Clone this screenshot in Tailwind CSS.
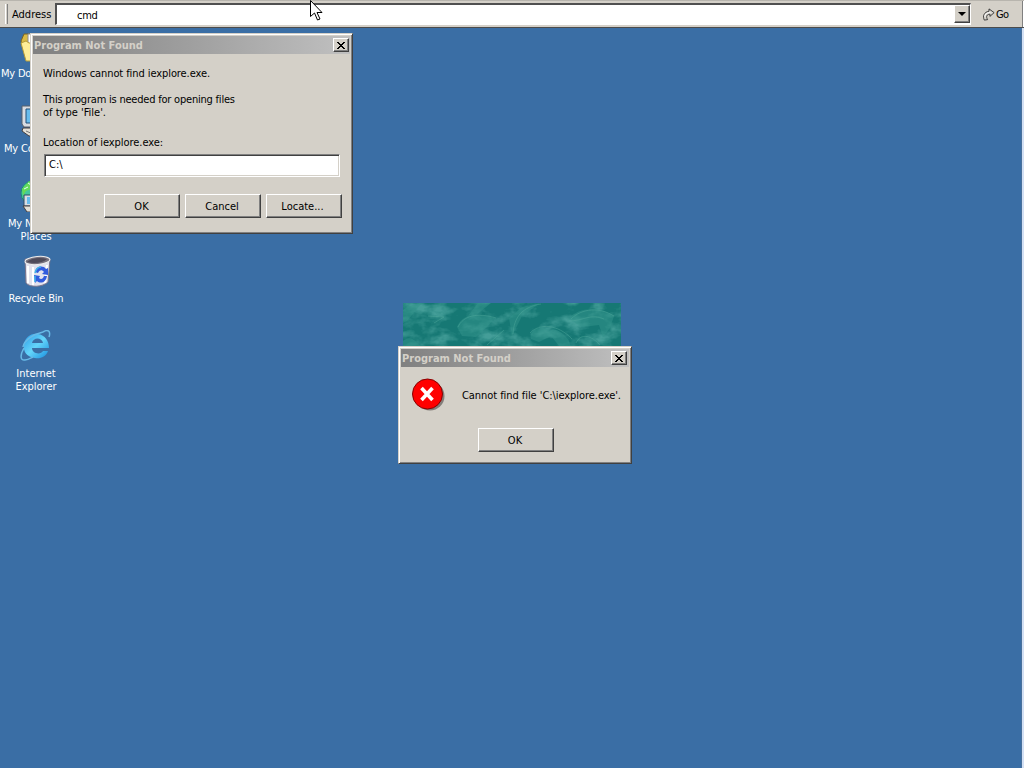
<!DOCTYPE html>
<html lang="en">
<head>
  <meta charset="UTF-8">
  <meta name="viewport" content="width=device-width, initial-scale=1.0">
  <title>Desktop</title>
  <script src="https://cdn.jsdelivr.net/npm/@tailwindcss/browser@4"></script>
</head>
<body class="relative w-[1024px] h-[768px] overflow-hidden bg-[#3a6ea5] font-['DejaVu_Sans_Condensed','DejaVu_Sans',sans-serif] text-[11px] leading-[13px] text-black cursor-default">

  <!-- Address bar -->
  <header class="flex h-[28px] items-center border-t border-b border-t-[#b8b5ae] border-b-[#4c4c4c] bg-[#d4d0c8] pl-[5px]">
    <div class="h-[20px] w-[3px] border-l border-r border-l-white border-r-[#808080]"></div>
    <span class="ml-[4px] w-[43px] whitespace-nowrap pt-px">Address</span>
    <div class="flex h-[22px] w-[916px] border-t-2 border-l-2 border-t-[#505050] border-l-[#505050] border-b border-r border-b-white border-r-white bg-white">
      <span class="flex-1 pl-[20px] pt-[4px] tracking-[-0.3px]">cmd</span>
      <button class="flex h-[18px] w-[16px] items-center justify-center border border-t-white border-l-white border-r-[#404040] border-b-[#404040] bg-[#d4d0c8] shadow-[inset_-1px_-1px_#808080]">
        <svg width="8" height="4" viewBox="0 0 8 4"><path d="M0 0h8L4 4z" fill="#000"/></svg>
      </button>
    </div>
    <div class="ml-[11px] flex items-center">
      <svg width="14" height="15" viewBox="0 0 15 15"><path d="M2.500 13.500C.5 9.500 2 4.800 7.500 4V1.500l5.500 4-4.500 4V7C5 7.500 4 9.500 6 13z" fill="#d8d5ce" stroke="#333" stroke-width="1"/><path d="M3 10C3 7 5 5.500 9 5.500" fill="none" stroke="#fff"/></svg>
      <span class="pt-px tracking-[-0.6px]">Go</span>
    </div>
    <div class="ml-auto h-full w-[2px] border-l border-[#808080] bg-white"></div>
  </header>
  <div class="ml-auto h-[740px] w-[3px] border-l border-[#49719c] bg-[#d3e0f4]"></div>

  <!-- Desktop icons -->
  <main class="absolute left-0 top-[30px] w-[72px] text-center text-white">
    <div class="flex h-[75px] flex-col items-center">
      <svg width="32" height="32" viewBox="0 0 32 32"><path d="M1 11L4 4h7l2 3h15v23H7z" fill="#d9ba45" stroke="#786322"/><path d="M8 4h16v16H8z" fill="#fff" stroke="#8c8c8c"/><path d="M1 13l5-2 3 2h20l-4 18H6z" fill="#ffee98" stroke="#b69b39"/></svg>
      <p class="mt-[5px] w-full pl-px text-left tracking-[-0.2px]">My Do</p>
    </div>
    <div class="flex h-[75px] flex-col items-center">
      <svg width="32" height="32" viewBox="0 0 32 32"><path d="M2 1h23l2 3v18H4l-2-3z" fill="#d8dce2" stroke="#59606a"/><path d="M6 4h17v14H6z" fill="#67bced" stroke="#234e79"/><path d="M3 23h23l4 5-3 3H9l-7-5z" fill="#e2dfd7" stroke="#453f40"/><path d="M6 26l7 3h10" fill="none" stroke="#777"/></svg>
      <p class="mt-[5px] w-full pl-[4px] text-left tracking-[-0.2px]">My Co</p>
    </div>
    <div class="flex h-[75px] flex-col items-center">
      <svg width="32" height="32" viewBox="0 0 32 32"><circle cx="13" cy="13" r="12" fill="#45c99c" stroke="#1c8b75"/><path d="M2 9l7-8 5 3-3 5-5 2-3 5zM12 11l7-7 5 8-5 6z" fill="#65db58"/><path d="M4 9l4-2M8 3l3 2" stroke="#e3ffff"/><path d="M4 15h21v11H4z" fill="#d8dce2" stroke="#304b65"/><path d="M7 17h14v7H7z" fill="#67bced"/><path d="M3 26h23l3 3-3 3H7z" fill="#e2dfd7" stroke="#453f40"/></svg>
      <p class="mt-[5px] w-full pl-[8px] text-left tracking-[-0.2px]">My N</p>
      <p class="tracking-[-0.1px]">Places</p>
    </div>
    <div class="flex h-[75px] flex-col items-center">
      <svg width="32" height="32" viewBox="0 0 32 32">
        <path d="M5 4l1 24c4 5 17 4 22-1l2-23z" fill="#e2e2ed" stroke="#77748b"/>
        <path d="M8 11v17M13 12v18M27 10l-2 18" stroke="#fff" stroke-width="2"/>
        <ellipse cx="17.500" cy="5.500" rx="12.500" ry="4" transform="rotate(-5 17.500 5.500)" fill="#77717e" stroke="#eee"/>
        <path d="M7 7c4-4 13-5 20-3-4 4-13 5-20 3z" fill="#4f4b59"/>
        <path d="M15 17c1-6 8-7 11-3l2-1v7l-6-1 2-2c-2-3-5-2-6 1zM27 21c-1 7-7 8-10 5l-2 2-1-8 6 1-1 2c2 2 4 1 5-2z" fill="#315bdd"/><path d="M15 18c1-4 3-6 6-6M15 21v6" fill="none" stroke="#43b4e7" stroke-width="1.500"/>
      </svg>
      <p class="mt-[5px] whitespace-nowrap tracking-[-0.2px]">Recycle Bin</p>
    </div>
    <div class="flex h-[75px] flex-col items-center">
      <svg width="32" height="32" viewBox="0 0 32 32">
        <defs><linearGradient id="ie" x1="0" y1="0" x2="1" y2="1"><stop offset="0" stop-color="#2d9be6"/><stop offset=".5" stop-color="#64d5fb"/><stop offset="1" stop-color="#178ddd"/></linearGradient></defs>
        <path d="M29 18H12c0 6 9 7 11 3h5c-2 6-8 8-13 7C7 27 3 22 4 15 5 7 11 3 18 4c7 1 11 7 11 14zM12 13h11c-1-6-10-6-11 0z" fill="url(#ie)"/>
        <path d="M23 2c5-3 8-1 6 5M4 18C0 25 0 31 5 30c3 0 6-2 8-3M3 17C4 10 14 4 23 2" fill="none" stroke="#68b9e6" stroke-width="1.500"/>
      </svg>
      <p class="mt-[5px]">Internet Explorer</p>
    </div>
  </main>

  <!-- Marbled banner behind the message box -->
  <svg class="absolute left-[403px] top-[303px]" width="218" height="44" viewBox="0 0 218 44">
    <defs>
      <filter id="marble" x="0" y="0" width="100%" height="100%">
        <feTurbulence type="fractalNoise" baseFrequency=".045 .07" numOctaves="4" seed="8"/>
        <feColorMatrix values="0 0 0 0 .2  0 0 0 0 .6  0 0 0 0 .55  3 0 0 0 -1.300"/>
      </filter>
    </defs>
    <path d="M0 0h218v44H0z" fill="#167874"/>
    <path d="M0 0h218v44H0z" filter="url(#marble)" opacity=".45"/>
    <g fill="#34958c" opacity=".5">
      <path d="M0 7C6 2 13 1 19 0L4 18l-4 2zM0 38c8-7 13 1 18 6H0zM54 24c6-15 23-14 38-9l-8 9-11 10-14-1zM128 36c-3-9 11-16 18-8 8-4 15 3 20 10l2 6h-11l-9-11-12 6zM166 16c9-13 33-12 45-3l-4 12-7 9-4-12-17 2z"/>
      <path d="M75 0h13L73 12l-8 1zM106 15l13-11 18-4-18 13-10 20z"/>
    </g>
    <g fill="none" stroke="#50a99b" opacity=".45">
      <path d="M25 13l16 1-10 6M55 24c5-11 19-15 38-9M127 30c9-10 28-9 42 6M168 16c11-11 29-12 43-3M166 18c14 0 22-8 35-2M110 31c1-17 9-27 28-30M84 42l17-15M173 40c5-11 16-7 24 2"/>
    </g>
  </svg>

  <!-- Program lookup dialog -->
  <section class="absolute left-[30px] top-[33px] flex h-[201px] w-[323px] flex-col border border-t-[#d4d0c8] border-l-[#d4d0c8] border-r-[#404040] border-b-[#404040] bg-[#d4d0c8] p-[2px] shadow-[inset_1px_1px_#fff,inset_-1px_-1px_#808080]">
    <div class="flex h-[18px] shrink-0 items-center bg-linear-to-r from-[#808080] to-[#c0c0c0] pr-px">
      <h1 class="flex-1 pl-px font-bold text-[#d4d0c8]">Program Not Found</h1>
      <button class="flex h-[14px] w-[16px] items-center justify-center border border-t-white border-l-white border-r-[#404040] border-b-[#404040] bg-[#d4d0c8] shadow-[inset_-1px_-1px_#808080]" aria-label="Close">
        <svg width="8" height="7" viewBox="0 0 8 7" shape-rendering="crispEdges"><path d="M0 0h2v1h1v1h2v-1h1v-1h2v1h-1v1h-1v1h-1v1h1v1h1v1h1v1h-2v-1h-1v-1h-2v1h-1v1h-2v-1h1v-1h1v-1h1v-1h-1v-1h-1v-1h-1z"/></svg>
      </button>
    </div>
    <div class="flex flex-col pl-[10px] pr-[8px] pt-[13px]">
      <p class="tracking-[-0.08px]">Windows cannot find iexplore.exe.</p>
      <p class="mt-[13px]"><span class="tracking-[-0.21px]">This program is needed for opening files</span><br>of type 'File'.</p>
      <label class="mt-[17px] tracking-[-0.04px]">Location of iexplore.exe:</label>
      <div class="mt-[5px] ml-px h-[23px] w-[296px] border border-t-[#808080] border-l-[#808080] border-r-white border-b-white bg-white pl-[4px] pt-[3px] shadow-[inset_1px_1px_#404040,inset_-1px_-1px_#d4d0c8]">C:\</div>
      <div class="mt-[17px] flex justify-end gap-[5px]">
        <button class="h-[24px] w-[76px] border border-t-white border-l-white border-r-[#404040] border-b-[#404040] pr-px shadow-[inset_-1px_-1px_#808080]">OK</button>
        <button class="h-[24px] w-[76px] border border-t-white border-l-white border-r-[#404040] border-b-[#404040] pr-[2px] shadow-[inset_-1px_-1px_#808080]">Cancel</button>
        <button class="h-[24px] w-[76px] border border-t-white border-l-white border-r-[#404040] border-b-[#404040] pr-[3px] shadow-[inset_-1px_-1px_#808080]">Locate...</button>
      </div>
    </div>
  </section>

  <!-- Error message box -->
  <section class="absolute left-[398px] top-[346px] flex h-[118px] w-[234px] flex-col border border-t-[#d4d0c8] border-l-[#d4d0c8] border-r-[#404040] border-b-[#404040] bg-[#d4d0c8] p-[2px] shadow-[inset_1px_1px_#fff,inset_-1px_-1px_#808080]">
    <div class="flex h-[18px] shrink-0 items-center bg-linear-to-r from-[#808080] to-[#c0c0c0] pr-[2px]">
      <h2 class="flex-1 pl-px font-bold text-[#d4d0c8]">Program Not Found</h2>
      <button class="flex h-[14px] w-[16px] items-center justify-center border border-t-white border-l-white border-r-[#404040] border-b-[#404040] bg-[#d4d0c8] shadow-[inset_-1px_-1px_#808080]" aria-label="Close">
        <svg width="8" height="7" viewBox="0 0 8 7" shape-rendering="crispEdges"><path d="M0 0h2v1h1v1h2v-1h1v-1h2v1h-1v1h-1v1h-1v1h1v1h1v1h1v1h-2v-1h-1v-1h-2v1h-1v1h-2v-1h1v-1h1v-1h1v-1h-1v-1h-1v-1h-1z"/></svg>
      </button>
    </div>
    <div class="flex items-center pl-[11px] pt-[11px]">
      <svg width="33" height="33" viewBox="0 0 33 33"><circle cx="18" cy="18" r="14.500" fill="#827e7a"/><circle cx="15.500" cy="16" r="15" fill="#f00" stroke="#850000"/><path d="M9.500 10l11 12M20.500 10l-11 12" stroke="#fff" stroke-width="3.600"/></svg>
      <p class="ml-[17px] whitespace-nowrap pt-[2px] tracking-[-0.06px]">Cannot find file 'C:\iexplore.exe'.</p>
    </div>
    <button class="mt-[17px] ml-[77px] h-[24px] w-[76px] shrink-0 border border-t-white border-l-white border-r-[#404040] border-b-[#404040] pr-[2px] shadow-[inset_-1px_-1px_#808080]">OK</button>
  </section>

  <!-- Mouse pointer -->
  <svg class="absolute left-[310px] top-0" width="13" height="21" viewBox="0 0 13 21"><path d="M.5.5v16l4-3.500 3 7 2.500-1-3-6.500h5z" fill="#fff" stroke="#000"/></svg>
</body>
</html>
